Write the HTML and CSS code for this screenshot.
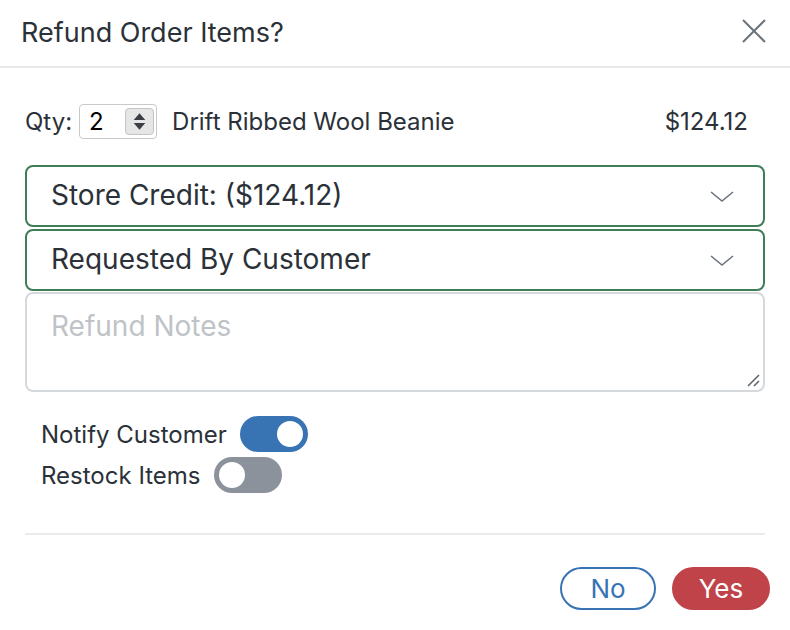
FILE: index.html
```html
<!DOCTYPE html>
<html>
<head>
<meta charset="utf-8">
<link rel="stylesheet" href="styles.css">
</head>
<body>
<div class="modal">
  <div class="header">
    <h1 class="title">Refund Order Items?</h1>
    <svg class="close" width="24" height="24" viewBox="0 0 24 24"><path d="M1 1 L23 23 M23 1 L1 23" stroke="#6b737c" stroke-width="2" fill="none"/></svg>
  </div>
  <div class="content">
    <div class="item-row">
      <span class="qty-label">Qty:</span>
      <div class="qty-box">
        <span class="qty-val">2</span>
        <span class="spinner">
          <svg width="28" height="27" viewBox="0 0 28 27"><path d="M8 12 L14 5 L20 12 Z M8 15 L14 22 L20 15 Z" fill="#3b3f44"/></svg>
        </span>
      </div>
      <span class="item-name">Drift Ribbed Wool Beanie</span>
      <span class="price">$124.12</span>
    </div>
    <div class="select">
      <span>Store Credit: ($124.12)</span>
      <svg class="chev" width="24" height="12" viewBox="0 0 24 12"><path d="M1 1 L12 10 L23 1" stroke="#6b737c" stroke-width="1.6" fill="none"/></svg>
    </div>
    <div class="select second">
      <span>Requested By Customer</span>
      <svg class="chev" width="24" height="12" viewBox="0 0 24 12"><path d="M1 1 L12 10 L23 1" stroke="#6b737c" stroke-width="1.6" fill="none"/></svg>
    </div>
    <div class="notes">
      <span class="placeholder">Refund Notes</span>
      <svg class="grip" width="14" height="14" viewBox="0 0 14 14"><path d="M2 13 L13 2 M8 13 L13 8" stroke="#5c6167" stroke-width="1.5" fill="none"/></svg>
    </div>
    <div class="toggles">
      <div class="toggle-row">
        <span>Notify Customer</span>
        <span class="switch on"><span class="knob"></span></span>
      </div>
      <div class="toggle-row">
        <span>Restock Items</span>
        <span class="switch off"><span class="knob"></span></span>
      </div>
    </div>
    <div class="divider"></div>
    <div class="actions">
      <button class="btn btn-no">No</button>
      <button class="btn btn-yes">Yes</button>
    </div>
  </div>
</div>
</body>
</html>
```
FILE: styles.css
```css
* { box-sizing: border-box; }
html, body { margin: 0; padding: 0; background: #fff; }
body {
  font-family: Inter, "Liberation Sans", Arial, sans-serif;
  color: #2b3138;
  width: 790px;
  height: 630px;
  overflow: hidden;
}
.header {
  height: 68px;
  padding: 0 24px 2px 21px;
  display: flex;
  align-items: center;
  justify-content: space-between;
  border-bottom: 2px solid #e9eaeb;
}
.title {
  margin: 0;
  font-size: 27px;
  font-weight: normal;
  color: #2b3138;
}
.close { margin-top: -3px; }
.content {
  padding: 0 25px;
}
.item-row {
  display: flex;
  align-items: center;
  height: 36px;
  margin-top: 35px;
  margin-bottom: 26px;
  font-size: 24px;
}
.qty-label { margin-right: 7px; }
.qty-box {
  width: 78px;
  height: 35px;
  border: 1px solid #c9c9c9;
  border-radius: 4px;
  display: flex;
  align-items: center;
  justify-content: space-between;
  padding: 0 2px 0 9px;
  color: #000;
  font-size: 24px;
  margin-right: 15px;
}
.spinner {
  width: 29px;
  height: 27px;
  background: #e6e6e6;
  border: 1px solid #c4c4c4;
  border-radius: 4px;
  display: flex;
  align-items: center;
  justify-content: center;
}
.spinner svg { display: block; }
.item-name { flex: 1; }
.price { margin-right: 17px; }
.select {
  height: 62px;
  border: 2px solid #3d7d58;
  border-radius: 8px;
  display: flex;
  align-items: center;
  justify-content: space-between;
  padding: 0 29px 0 24px;
  font-size: 28px;
}
.select.second { margin-top: 2px; }
.select span { margin-top: -2px; }
.chev { margin-top: 2px; }
.notes {
  position: relative;
  height: 100px;
  margin-top: 1px;
  border: 2px solid #d6d9dc;
  border-radius: 8px;
  padding: 15px 24px;
  font-size: 28px;
}
.placeholder { color: #bfc3c7; }
.grip {
  position: absolute;
  right: 3px;
  bottom: 3px;
}
.toggles {
  padding-left: 16px;
  margin-top: 24px;
  display: flex;
  flex-direction: column;
  gap: 5px;
  font-size: 24px;
}
.toggle-row {
  display: flex;
  align-items: center;
  gap: 13px;
  height: 36px;
}
.switch {
  width: 68px;
  height: 36px;
  border-radius: 18px;
  display: flex;
  align-items: center;
  padding: 0 5px;
}
.switch.on { background: #3873b4; justify-content: flex-end; }
.switch.off { background: #8b929c; justify-content: flex-start; }
.knob {
  width: 26px;
  height: 26px;
  border-radius: 50%;
  background: #fff;
}
.divider {
  height: 2px;
  background: #ebebeb;
  margin-top: 40px;
}
.actions {
  display: flex;
  justify-content: flex-end;
  gap: 16px;
  margin-top: 32px;
  margin-right: -5px;
}
.btn {
  height: 43px;
  border-radius: 22px;
  font-family: Inter, "Liberation Sans", Arial, sans-serif;
  font-size: 26px;
  padding: 0;
  display: flex;
  align-items: center;
  justify-content: center;
}
.btn-no {
  width: 96px;
  background: #fff;
  border: 2px solid #3873b4;
  color: #3873b4;
}
.btn-yes {
  width: 98px;
  background: #c0434a;
  border: 2px solid #c0434a;
  color: #fff;
}
```
